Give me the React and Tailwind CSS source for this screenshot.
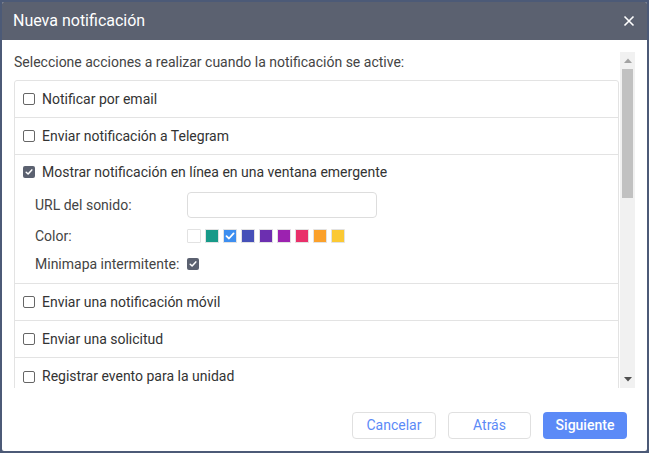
import { useState } from 'react'

const COLORS = ['#ffffff', '#179a89', '#3d8ef0', '#4650b8', '#6c2fb0', '#9c22b0', '#e9306a', '#fba12b', '#fbc934']

function Check({ checked }) {
  return checked ? (
    <span className="w-[12px] h-[12px] rounded-[2px] bg-[#5b6170] flex items-center justify-center shrink-0">
      <svg width="8" height="8" viewBox="0 0 8 8" fill="none">
        <path d="M1.2 4.2 L3.1 6 L6.8 1.9" stroke="#fff" strokeWidth="1.5" strokeLinecap="round" strokeLinejoin="round" />
      </svg>
    </span>
  ) : (
    <span className="w-[12px] h-[12px] rounded-[2px] border border-[#666] bg-white shrink-0" />
  )
}

function Row({ label, checked, last }) {
  return (
    <div className={`h-[37px] flex items-center gap-[7px] pl-[8px] ${last ? '' : 'border-b border-[#e3e3e3]'}`}>
      <Check checked={checked} />
      <span className="text-[14px] text-[#333]">{label}</span>
    </div>
  )
}

export default function App() {
  const [color] = useState(2)

  return (
    <div className="w-[649px] h-[453px] bg-[#4c5a77]" style={{ fontFamily: 'Roboto, "Liberation Sans", sans-serif' }}>
      <div className="w-full h-full border-2 border-[#4c5a77] rounded-[4px] bg-white flex flex-col overflow-hidden">
        {/* Header */}
        <div className="h-[38px] bg-[#5b6170] flex items-center justify-between pl-[11px] pr-[12px] shrink-0">
          <span className="text-white text-[16px]">Nueva notificación</span>
          <svg width="12" height="12" viewBox="0 0 12 12">
            <path d="M1.5 1.5 L10.5 10.5 M10.5 1.5 L1.5 10.5" stroke="#fff" strokeWidth="1.6" />
          </svg>
        </div>

        {/* Body */}
        <div className="flex pt-[12px] pl-[12px] pr-[12px] h-[348px] shrink-0">
          <div className="flex-1 h-[336px] overflow-hidden">
            <p className="text-[14px] text-[#444] leading-[20px] mb-[8px]">
              Seleccione acciones a realizar cuando la notificación se active:
            </p>
            <div className="border border-[#e3e3e3] rounded-t-[3px]">
              <Row label="Notificar por email" />
              <Row label="Enviar notificación a Telegram" />
              <div className="border-b border-[#e3e3e3] h-[129px]">
                <div className="h-[34px] flex items-center gap-[7px] pl-[8px]">
                  <Check checked />
                  <span className="text-[14px] text-[#333]">Mostrar notificación en línea en una ventana emergente</span>
                </div>
                <div className="pl-[20px] flex flex-col">
                  <div className="flex items-center h-[30px] mt-[1px]">
                    <span className="w-[152px] text-[14px] text-[#444]">URL del sonido:</span>
                    <div className="w-[190px] h-[26px] border border-[#ddd] rounded-[4px]" />
                  </div>
                  <div className="flex items-center h-[28px] mt-[2px]">
                    <span className="w-[152px] text-[14px] text-[#444]">Color:</span>
                    <div className="flex gap-[4px]">
                      {COLORS.map((c, i) => (
                        <span
                          key={c}
                          className="w-[14px] h-[14px] rounded-[1px] border border-[#e2e2e2] flex items-center justify-center"
                          style={{ backgroundColor: c }}
                        >
                          {i === color && (
                            <svg width="10" height="10" viewBox="0 0 10 10" fill="none">
                              <path d="M1.5 5.2 L4 7.5 L8.6 2.4" stroke="#fff" strokeWidth="1.8" strokeLinecap="round" strokeLinejoin="round" />
                            </svg>
                          )}
                        </span>
                      ))}
                    </div>
                  </div>
                  <div className="flex items-center h-[28px]">
                    <span className="w-[152px] text-[14px] text-[#444]">Minimapa intermitente:</span>
                    <Check checked />
                  </div>
                </div>
              </div>
              <Row label="Enviar una notificación móvil" />
              <Row label="Enviar una solicitud" />
              <Row label="Registrar evento para la unidad" last />
            </div>
          </div>

          {/* Scrollbar */}
          <div className="w-[15px] h-[336px] bg-[#f1f1f1] flex flex-col ml-[1px] shrink-0">
            <div className="h-[17px] flex items-center justify-center">
              <svg width="8" height="5" viewBox="0 0 8 5"><path d="M0 5 L4 0.5 L8 5 Z" fill="#a3a3a3" /></svg>
            </div>
            <div className="mx-[2px] h-[129px] bg-[#c1c1c1]" />
            <div className="flex-1" />
            <div className="h-[17px] flex items-center justify-center">
              <svg width="8" height="5" viewBox="0 0 8 5"><path d="M0 0 L8 0 L4 4.5 Z" fill="#505050" /></svg>
            </div>
          </div>
        </div>

        {/* Footer */}
        <div className="flex justify-end gap-[13px] pr-[20px] pt-[24px]">
          <button className="w-[84px] h-[27px] rounded-[4px] border border-[#e0e0e0] bg-white text-[14px] text-[#5b8af7]">Cancelar</button>
          <button className="w-[83px] h-[27px] rounded-[4px] border border-[#e0e0e0] bg-white text-[14px] text-[#5b8af7] ml-[-1px]">Atrás</button>
          <button className="w-[84px] h-[27px] rounded-[4px] bg-[#5b8af7] text-[14px] text-white font-medium ml-[-1px]">Siguiente</button>
        </div>
      </div>
    </div>
  )
}
